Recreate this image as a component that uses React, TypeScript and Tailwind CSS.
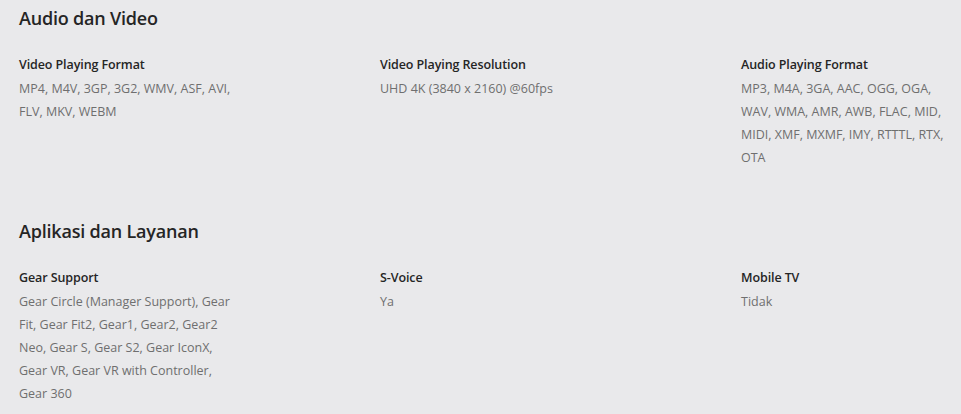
const sections = [
  {
    title: 'Audio dan Video',
    items: [
      { label: 'Video Playing Format', value: 'MP4, M4V, 3GP, 3G2, WMV, ASF, AVI, FLV, MKV, WEBM' },
      { label: 'Video Playing Resolution', value: 'UHD 4K (3840 x 2160) @60fps' },
      { label: 'Audio Playing Format', value: 'MP3, M4A, 3GA, AAC, OGG, OGA, WAV, WMA, AMR, AWB, FLAC, MID, MIDI, XMF, MXMF, IMY, RTTTL, RTX, OTA' },
    ],
  },
  {
    title: 'Aplikasi dan Layanan',
    items: [
      { label: 'Gear Support', value: 'Gear Circle (Manager Support), Gear Fit, Gear Fit2, Gear1, Gear2, Gear2 Neo, Gear S, Gear S2, Gear IconX, Gear VR, Gear VR with Controller, Gear 360' },
      { label: 'S-Voice', value: 'Ya' },
      { label: 'Mobile TV', value: 'Tidak' },
    ],
  },
];

export default function App() {
  return (
    <div className="min-h-[414px] w-[961px] overflow-hidden bg-[#e9e9eb] pl-[19px] pt-[6px] font-['Open_Sans',sans-serif]">
      {sections.map((section, i) => (
        <section key={section.title} className={i > 0 ? 'mt-[50px]' : ''}>
          <h2 className="text-[18px] font-semibold leading-[24px] tracking-[-0.2px] text-[#252525]">{section.title}</h2>
          <div className="mt-[24px] grid grid-cols-[361px_361px_220px]">
            {section.items.map((item) => (
              <div key={item.label} className="max-w-[222px]">
                <h3 className="text-[12.5px] font-semibold leading-[22px] tracking-[-0.1px] text-[#252525]">{item.label}</h3>
                <p className="mt-[1px] text-[12.5px] leading-[23px] text-[#6f6f6f]">{item.value}</p>
              </div>
            ))}
          </div>
        </section>
      ))}
    </div>
  );
}
